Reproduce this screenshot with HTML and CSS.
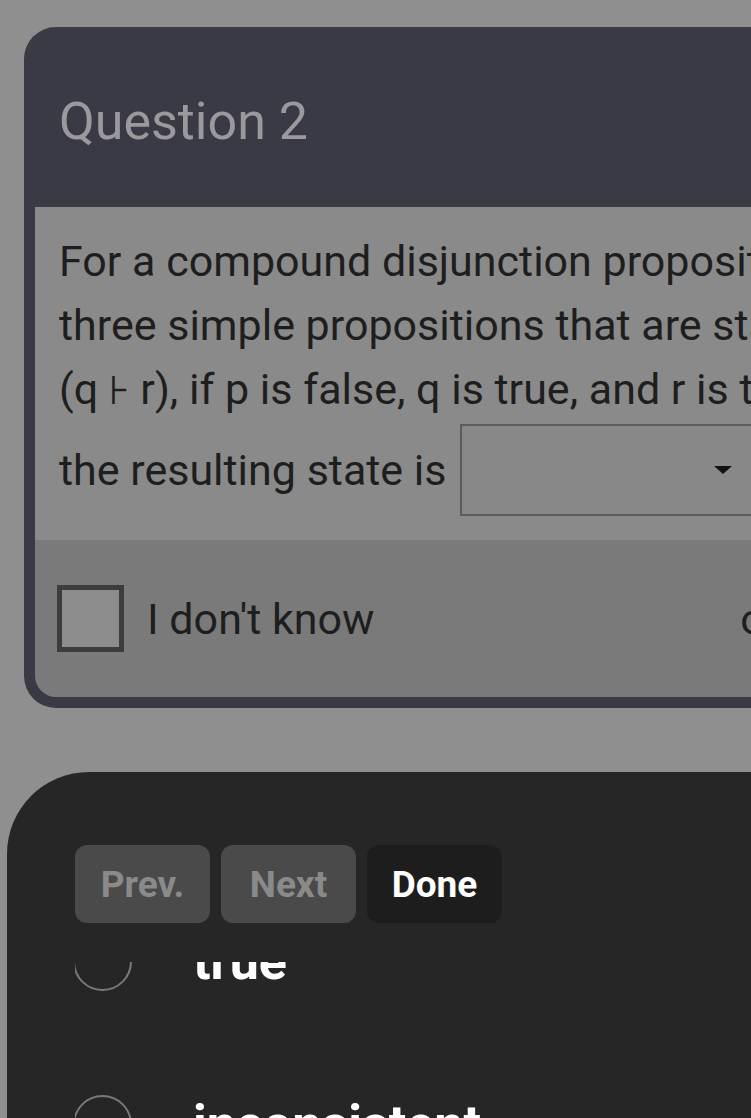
FILE: index.html
```html
<!DOCTYPE html>
<html lang="en">

<head>
    <meta charset="UTF-8">
    <meta name="viewport" content="width=device-width, initial-scale=1.0">
    <title>Question 2</title>
    <link rel="stylesheet" href="styles.css">
</head>

<body>
    <div class="page">
        <div class="card">
            <div class="card-header">
                <h2 class="title">Question 2</h2>
            </div>
            <div class="card-body">
                <p class="question">For a compound disjunction proposition with<br>
                    three simple propositions that are stated as p &or;<br>
                    (q <span class="sym">&#8870;</span> r), if p is false, q is true, and r is true,</p>
                <div class="answer-row">
                    <span>the resulting state is</span>
                    <div class="dropdown">
                        <span class="caret"></span>
                    </div>
                </div>
            </div>
            <div class="card-footer">
                <div class="checkbox"></div>
                <span class="dont-know">I don't know</span>
                <span class="hint">or skip</span>
            </div>
        </div>
    </div>

    <!-- answer picker sheet -->
    <div class="sheet">
        <div class="nav">
            <button class="nav-btn">Prev.</button>
            <button class="nav-btn">Next</button>
            <button class="nav-btn done">Done</button>
        </div>
        <div class="options">
            <div class="options-list">
                <div class="option">
                    <span class="radio"></span>
                    <span class="option-label">true</span>
                </div>
                <div class="option">
                    <span class="radio"></span>
                    <span class="option-label">inconsistent</span>
                </div>
            </div>
        </div>
    </div>
</body>

</html>
```

FILE: styles.css
```css
*,
*::before,
*::after {
    box-sizing: border-box;
}

html,
body {
    height: 1118px;
}

body {
    margin: 0;
    background-color: #8f8f8f;
    font-family: Roboto, "Liberation Sans", Arial, sans-serif;
    overflow: hidden;
}

.page {
    padding: 27px 0 0 24px;
}

.card {
    width: 1000px;
    background-color: #3a3a44;
    border-radius: 32px;
    padding: 0 0 11px 11px;
}

.card-header {
    height: 180px;
    padding: 65px 0 0 24px;
}

.title {
    margin: 0;
    font-size: 52px;
    font-weight: 400;
    line-height: 60px;
    color: #9a9a9c;
}

.card-body {
    background-color: #8a8a8a;
    padding: 22px 0 24px 24px;
    color: #1e1e1e;
    font-size: 43px;
}

.question {
    margin: 0;
    line-height: 64px;
    white-space: nowrap;
}

.sym {
    font-family: "DejaVu Sans", sans-serif;
    font-size: 40px;
}

.answer-row {
    display: flex;
    align-items: center;
    margin-top: 2px;
    line-height: 64px;
}

.dropdown {
    display: flex;
    align-items: center;
    width: 300px;
    height: 92px;
    margin-left: 14px;
    border: 2px solid #5c5c5c;
    background-color: #888888;
}

.caret {
    margin-left: auto;
    margin-right: 26px;
    border-left: 9px solid transparent;
    border-right: 9px solid transparent;
    border-top: 8px solid #111;
}

.card-footer {
    display: flex;
    align-items: center;
    height: 157px;
    padding-left: 22px;
    background-color: #7a7a7a;
    border-bottom-left-radius: 21px;
    color: #1e1e1e;
    font-size: 43px;
    white-space: nowrap;
}

.checkbox {
    width: 67px;
    height: 67px;
    border: 5px solid #3d3d3d;
    background-color: #8d8d8d;
}

.dont-know {
    margin-left: 23px;
}

.hint {
    margin-left: 366px;
}

.sheet {
    width: 1000px;
    height: 400px;
    margin: 64px 0 0 7px;
    background-color: #262626;
    border-top-left-radius: 82px;
    padding: 73px 0 0 68px;
}

.nav {
    display: flex;
    gap: 11px;
}

.nav-btn {
    width: 135px;
    height: 78px;
    border: none;
    border-radius: 12px;
    background-color: #4a4a4a;
    color: #8a8a8a;
    font-family: Roboto, "Liberation Sans", Arial, sans-serif;
    font-size: 37px;
    font-weight: 700;
    padding: 0;
}

.nav-btn.done {
    background-color: #1d1d1d;
    color: #ffffff;
}

.options {
    margin-top: 39px;
    height: 200px;
    overflow: hidden;
}

/* list is scrolled a little, first row sits under the nav */
.options-list {
    margin-top: -82px;
}

.option {
    display: flex;
    align-items: center;
    height: 163px;
    margin-left: -2px;
}

.radio {
    width: 59px;
    height: 59px;
    border: 2.5px solid #7a7a7a;
    border-radius: 50%;
}

.option-label {
    margin-left: 61px;
    color: #ffffff;
    font-size: 52px;
    font-weight: 700;
}
```
